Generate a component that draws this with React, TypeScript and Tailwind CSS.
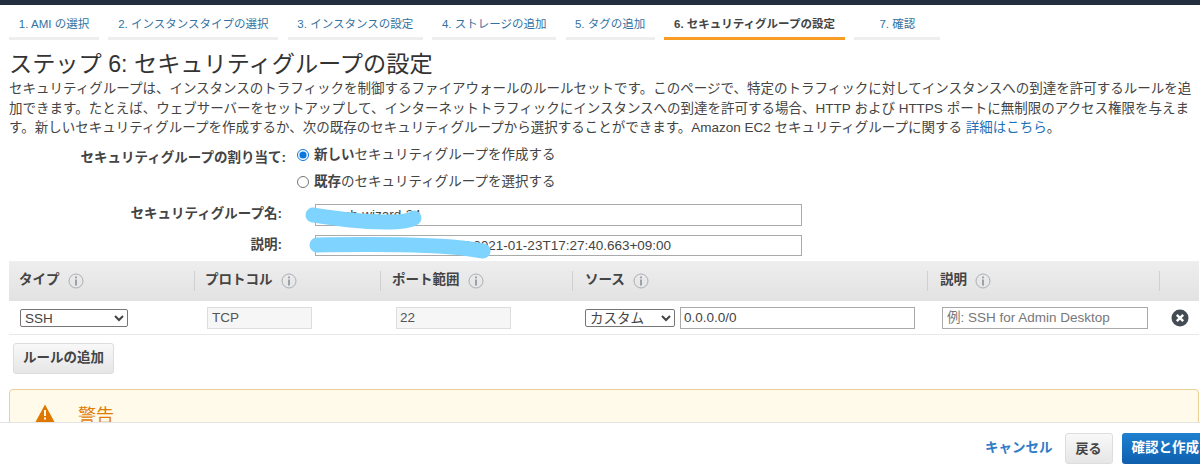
import React from "react";

const tabs = [
  { label: "1. AMI の選択", width: "w-[90px]" },
  { label: "2. インスタンスタイプの選択", width: "w-[170px]" },
  { label: "3. インスタンスの設定", width: "w-[135px]" },
  { label: "4. ストレージの追加", width: "w-[124px]" },
  { label: "5. タグの追加", width: "w-[89px]" },
  { label: "6. セキュリティグループの設定", width: "w-[181px]", active: true },
  { label: "7. 確認", width: "w-[86px]" },
];

const InfoIcon = () => (
  <svg width="16" height="16" viewBox="0 0 16 16" className="shrink-0">
    <circle cx="8" cy="8" r="7" fill="none" stroke="#aab0b5" strokeWidth="1" />
    <rect x="7.2" y="3.5" width="1.6" height="1.8" fill="#8a9096" />
    <rect x="7.2" y="6.5" width="1.6" height="6" fill="#8a9096" />
  </svg>
);

const HeaderCell = ({ label, className }: { label: string; className: string }) => (
  <div className={`flex items-center gap-[8px] h-[20px] border-r border-[#d0d0d0] ${className}`}>
    <span className="text-[13.5px] font-bold text-[#444]">{label}</span>
    <InfoIcon />
  </div>
);

export default function App() {
  return (
    <div className="h-[474px] w-[1200px] overflow-hidden bg-white font-['Liberation_Sans','Noto_Sans_CJK_JP',sans-serif] text-[#444]">
      <div className="h-[5px] bg-[#232f3e]" />

      <div className="h-[418px] overflow-hidden border-b border-[#e4e4e4]">
        {/* Wizard steps */}
        <div className="flex gap-[9.4px] pl-[9px] pt-[9px]">
          {tabs.map((tab) => (
            <div
              key={tab.label}
              className={`${tab.width} h-[26px] shrink-0 border-b-[3px] text-center text-[11.5px] leading-[21px] whitespace-nowrap ${
                tab.active
                  ? "border-[#f89c24] font-bold text-[#444]"
                  : "border-[#eeeeee] text-[#33729f]"
              }`}
            >
              {tab.label}
            </div>
          ))}
        </div>

        <h1 className="pl-[9px] pt-[9px] text-[23.2px] leading-[30px] font-normal text-[#333] whitespace-nowrap">
          ステップ 6: セキュリティグループの設定
        </h1>

        <p className="pl-[9px] text-[13.5px] leading-[19.5px] whitespace-nowrap text-[#444]">
          セキュリティグループは、インスタンスのトラフィックを制御するファイアウォールのルールセットです。このページで、特定のトラフィックに対してインスタンスへの到達を許可するルールを追
          <br />
          加できます。たとえば、ウェブサーバーをセットアップして、インターネットトラフィックにインスタンスへの到達を許可する場合、HTTP および HTTPS ポートに無制限のアクセス権限を与えま
          <br />
          す。新しいセキュリティグループを作成するか、次の既存のセキュリティグループから選択することができます。Amazon EC2 セキュリティグループに関する{" "}
          <a className="text-[#1f6fb5]">詳細はこちら</a>。
        </p>

        {/* Assignment */}
        <div className="mt-[7px] flex">
          <div className="w-[286px] pt-[3px] text-right text-[13.5px] leading-[20px] font-bold">
            セキュリティグループの割り当て:
          </div>
          <div className="ml-[11px] flex flex-col gap-[7px] text-[13.5px] leading-[20px]">
            <label className="flex h-[20px] items-center gap-[5px]">
              <input type="radio" name="sg" defaultChecked className="m-0 size-[12px] accent-[#0a76e0]" />
              <span>
                <b>新しい</b>セキュリティグループを作成する
              </span>
            </label>
            <label className="flex h-[20px] items-center gap-[5px]">
              <input type="radio" name="sg" className="m-0 size-[12px]" />
              <span>
                <b>既存</b>のセキュリティグループを選択する
              </span>
            </label>
          </div>
        </div>

        {/* Name and description */}
        <div className="mt-[12px] flex items-center">
          <div className="w-[282px] text-right text-[13.5px] font-bold">セキュリティグループ名:</div>
          <div className="relative ml-[33px]">
            <input
              readOnly
              value="launch-wizard-34"
              className="block h-[22px] w-[487px] border border-[#aaa] px-[2px] text-[13.5px] text-[#444]"
            />
            <svg width="130" height="32" className="absolute left-[-12px] top-[-4px]">
              <path
                d="M10 15 C 37 19, 57 22, 82 22 C 97 22, 107 21, 111 18"
                fill="none"
                stroke="#7fd3ff"
                strokeWidth="15"
                strokeLinecap="round"
              />
            </svg>
          </div>
        </div>
        <div className="mt-[9px] flex items-center">
          <div className="w-[282px] text-right text-[13.5px] font-bold">説明:</div>
          <div className="relative ml-[33px]">
            <input
              readOnly
              value="launch-wizard-34 created 2021-01-23T17:27:40.663+09:00"
              className="block h-[21px] w-[487px] border border-[#aaa] px-[2px] text-[13.5px] text-[#444]"
            />
            <svg width="200" height="32" className="absolute left-[-10px] top-[-2px]">
              <path
                d="M12 12 C 70 11, 130 11, 165 16 L 178 18"
                fill="none"
                stroke="#7fd3ff"
                strokeWidth="15"
                strokeLinecap="round"
              />
            </svg>
          </div>
        </div>

        {/* Rules table */}
        <div className="ml-[9px] mr-[1px] mt-[5px]">
          <div className="flex h-[40px] items-center bg-gradient-to-b from-[#eeeeee] to-[#e2e2e2]">
            <HeaderCell label="タイプ" className="w-[186px] pl-[10px]" />
            <HeaderCell label="プロトコル" className="w-[186px] pl-[10px]" />
            <HeaderCell label="ポート範囲" className="w-[192px] pl-[11px]" />
            <HeaderCell label="ソース" className="w-[355px] pl-[12px]" />
            <HeaderCell label="説明" className="w-[232px] pl-[12px]" />
          </div>
          <div className="flex h-[34px] items-center border-b border-[#e8e8e8] pt-[1px] text-[13.5px]">
            <select className="ml-[11px] h-[18px] w-[108px] rounded-[2px] border border-[#767676] bg-white text-[13.5px] leading-none">
              <option>SSH</option>
            </select>
            <input
              readOnly
              value="TCP"
              className="ml-[79px] h-[22px] w-[105px] border border-[#ddd] bg-[#f6f6f6] px-[4px] text-[13.5px] text-[#555]"
            />
            <input
              readOnly
              value="22"
              className="ml-[84px] h-[22px] w-[115px] border border-[#ddd] bg-[#f6f6f6] px-[3px] text-[13.5px] text-[#555]"
            />
            <select className="ml-[74px] h-[18px] w-[90px] rounded-[2px] border border-[#767676] bg-white text-[13.5px] leading-none">
              <option>カスタム</option>
            </select>
            <input
              readOnly
              value="0.0.0.0/0"
              className="ml-[5px] h-[22px] w-[235px] border border-[#aaa] px-[3px] text-[13.5px] text-[#444]"
            />
            <input
              readOnly
              placeholder="例: SSH for Admin Desktop"
              className="ml-[27px] h-[22px] w-[206px] border border-[#aaa] px-[4px] text-[13.5px] placeholder:text-[#777]"
            />
            <svg width="18" height="18" viewBox="0 0 18 18" className="ml-[23px]">
              <circle cx="9" cy="9" r="8.5" fill="#444b52" />
              <path d="M5.8 5.8 L12.2 12.2 M12.2 5.8 L5.8 12.2" stroke="#fff" strokeWidth="2.4" />
            </svg>
          </div>

          <button className="ml-[4px] mt-[8px] block h-[31px] w-[101px] rounded-[3px] border border-[#ddd] bg-gradient-to-b from-[#f8f8f8] to-[#e6e6e6] text-[13.5px] font-bold text-[#444]">
            ルールの追加
          </button>

          {/* Warning */}
          <div className="mt-[15px] flex h-[60px] rounded-t-[4px] border border-[#eccf94] bg-[#fffaea] pl-[25px] pt-[14px]">
            <svg width="20" height="18" viewBox="0 0 20 18" className="shrink-0">
              <path d="M10 0.5 L19.5 18 L0.5 18 Z" fill="#e07700" />
              <rect x="9" y="6" width="2" height="6" fill="#fffaea" />
              <rect x="9" y="13.5" width="2" height="2" fill="#fffaea" />
            </svg>
            <div className="ml-[23px] text-[18px] leading-[24px] text-[#e07b00]">警告</div>
          </div>
        </div>
      </div>

      {/* Footer actions */}
      <div className="flex items-center pl-[985px] pt-[10px] whitespace-nowrap">
        <a className="text-[13.5px] font-bold text-[#2f7cc7]">キャンセル</a>
        <button className="ml-[12px] h-[31px] w-[48px] shrink-0 rounded-[3px] border border-[#ddd] bg-gradient-to-b from-[#f8f8f8] to-[#e6e6e6] text-[13px] font-bold text-[#444]">
          戻る
        </button>
        <button className="ml-[9px] h-[31px] w-[90px] shrink-0 rounded-[3px] bg-gradient-to-b from-[#1f80d0] to-[#0f5fae] pl-[10px] text-left text-[13.5px] font-bold text-white">
          確認と作成
        </button>
      </div>
    </div>
  );
}
